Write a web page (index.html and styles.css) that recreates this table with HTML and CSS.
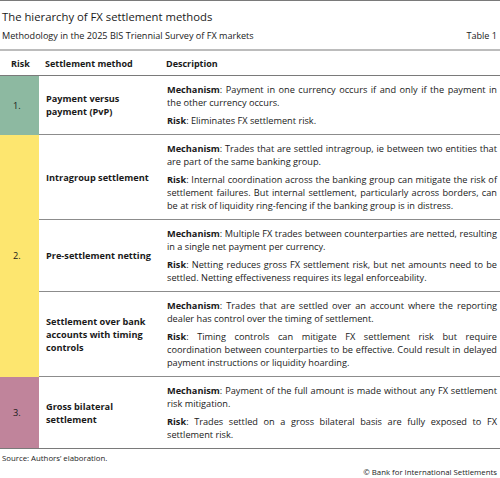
FILE: index.html
```html
<!DOCTYPE html>
<html lang="en">
<head>
    <meta charset="UTF-8">
    <title>The hierarchy of FX settlement methods</title>
    <link rel="stylesheet" href="styles.css">
</head>
<body>
<div class="figure">
    <div class="head">
        <h1 class="title">The hierarchy of FX settlement methods</h1>
        <div class="subtitle">
            <span>Methodology in the 2025 BIS Triennial Survey of FX markets</span>
            <span>Table 1</span>
        </div>
    </div>
    <table class="grid">
        <colgroup>
            <col class="col-risk">
            <col class="col-method">
            <col class="col-desc">
        </colgroup>
        <thead>
        <tr>
            <th class="h-risk">Risk</th>
            <th>Settlement method</th>
            <th>Description</th>
        </tr>
        </thead>
        <tbody>
        <tr class="first">
            <td class="risk green">1.</td>
            <td class="method">Payment versus payment (PvP)</td>
            <td class="desc">
                <p><b>Mechanism</b>: Payment in one currency occurs if and only if the payment in the other currency occurs.</p>
                <p><b>Risk</b>: Eliminates FX settlement risk.</p>
            </td>
        </tr>
        <tr>
            <td class="risk yellow" rowspan="3">2.</td>
            <td class="method">Intragroup settlement</td>
            <td class="desc">
                <p><b>Mechanism</b>: Trades that are settled intragroup, ie between two entities that are part of the same banking group.</p>
                <p><b>Risk</b>: Internal coordination across the banking group can mitigate the risk of settlement failures. But internal settlement, particularly across borders, can be&nbsp;at risk of liquidity ring-fencing if the banking group is in distress.</p>
            </td>
        </tr>
        <tr>
            <td class="method">Pre-settlement netting</td>
            <td class="desc">
                <p><b>Mechanism</b>: Multiple FX trades between counterparties are netted, resulting in a single net payment per currency.</p>
                <p><b>Risk</b>: Netting reduces gross FX settlement risk, but net amounts need to be settled. Netting effectiveness requires its legal enforceability.</p>
            </td>
        </tr>
        <tr>
            <td class="method">Settlement over bank accounts with timing controls</td>
            <td class="desc">
                <p><b>Mechanism</b>: Trades that are settled over an account where the reporting dealer has control over the timing of settlement.</p>
                <p><b>Risk</b>: Timing controls can mitigate FX settlement risk but require coordination between counterparties to be effective. Could result in delayed payment instructions or liquidity hoarding.</p>
            </td>
        </tr>
        <tr>
            <td class="risk pink">3.</td>
            <td class="method">Gross bilateral settlement</td>
            <td class="desc">
                <p><b>Mechanism</b>: Payment of the full amount is made without any FX settlement risk mitigation.</p>
                <p><b>Risk</b>: Trades settled on a gross bilateral basis are fully exposed to FX settlement risk.</p>
            </td>
        </tr>
        </tbody>
    </table>
    <div class="source">Source: Authors’ elaboration.</div>
    <div class="copy">© Bank for International Settlements</div>
</div>
</body>
</html>
```

FILE: styles.css
```css
body{
    margin:0;
    background:#fff;
}
.figure{
    width:500px;
    font-family:"Open Sans", "Noto Sans", sans-serif;
    color:#1a1a1a;
    border-top:1px solid #7a7a7a;
    border-bottom:1px solid #7a7a7a;
}
.head{
    border-bottom:2px solid #bcbcbc;
    padding:0 3px 7px 2px;
}
.title{
    margin:8px 0 0 0;
    font-size:11.3px;
    line-height:15px;
    font-weight:normal;
}
.subtitle{
    display:flex;
    justify-content:space-between;
    margin-top:6px;
    font-size:9.1px;
    line-height:12px;
}
.grid{
    width:500px;
    border-collapse:collapse;
    table-layout:fixed;
    border-bottom:1px solid #7a7a7a;
}
.col-risk{ width:39px; }
.col-method{ width:121px; }
.col-desc{ width:340px; }
.grid th{
    height:24px;
    padding:0 0 0 6px;
    text-align:left;
    font-size:9px;
    font-weight:bold;
    border-bottom:1px solid #7a7a7a;
}
.grid th.h-risk{
    padding-left:11px;
}
.grid td{
    vertical-align:middle;
    font-size:9.2px;
    line-height:13px;
}
.grid td.method,
.grid td.desc{
    border-top:1px solid #8c8c8c;
}
.grid tr.first td{
    border-top:none;
}
.risk{
    padding:0 0 0 13px;
}
.green{ background:#8db9a1; }
.yellow{ background:#fde66f; }
.pink{ background:#c0849b; }
.method{
    padding:0 9px 0 7px;
    font-weight:bold;
    font-size:9.3px;
}
.desc{
    padding:7px 3px 7px 7px;
    text-align:justify;
}
.desc p{
    margin:0;
}
.desc p + p{
    margin-top:5px;
}
.source{
    margin-top:3px;
    padding-left:2px;
    font-size:7.8px;
    line-height:12px;
}
.copy{
    margin-top:2px;
    padding-right:3px;
    text-align:right;
    font-size:7.8px;
    line-height:12px;
}
```
